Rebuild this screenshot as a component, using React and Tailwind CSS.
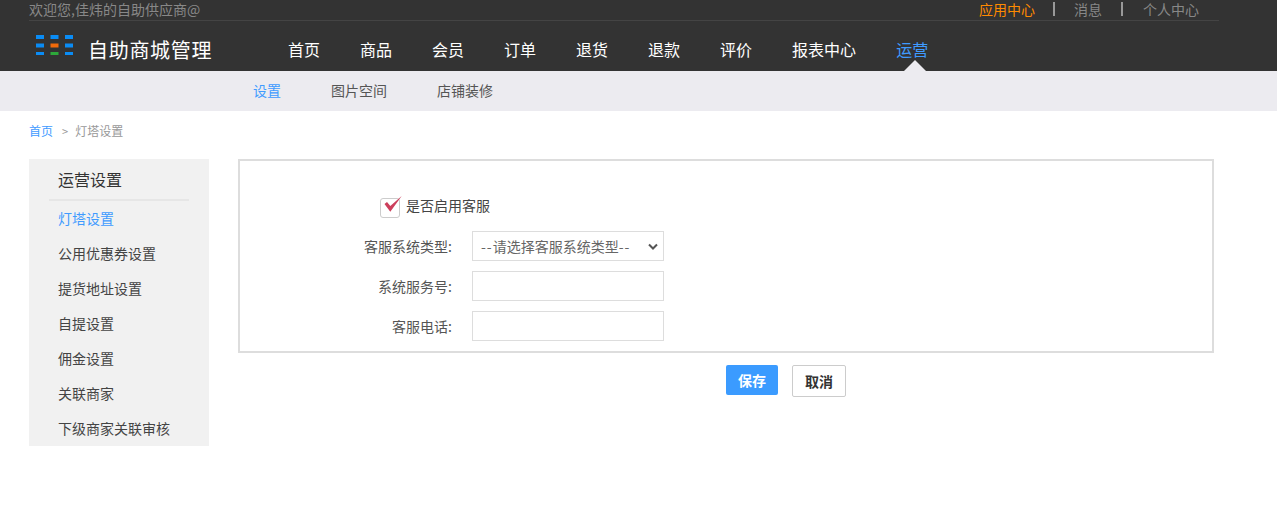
const FONT = "font-['Microsoft_YaHei','Noto_Sans_CJK_SC','Noto_Sans',sans-serif]";

function Logo() {
  const colors = [
    ["#0a8cf5", "#0a8cf5", "#0a8cf5"],
    ["#0a8cf5", "#f26a0a", "#0a8cf5"],
    ["#0a8cf5", "#2da83a", "#0a8cf5"],
  ];
  return (
    <svg width="38" height="20" viewBox="0 0 38 20" className="block">
      {colors.map((row, r) =>
        row.map((c, i) => (
          <rect key={`${r}-${i}`} x={i * 14.5} y={r * 8.5} width="8" height="4" fill={c} />
        ))
      )}
    </svg>
  );
}

const nav = ["首页", "商品", "会员", "订单", "退货", "退款", "评价", "报表中心"];
const side = ["公用优惠券设置", "提货地址设置", "自提设置", "佣金设置", "关联商家", "下级商家关联审核"];

function Label({ children }) {
  return <label className="w-[232px] pr-[20px] text-right text-[14px] text-[#555] leading-[20px] shrink-0">{children}</label>;
}

export default function App() {
  return (
    <div className={`${FONT} w-[1277px] h-[505px] bg-white overflow-hidden`}>
      <header className="bg-[#333333] h-[71px]">
        <div className="ml-[29px] w-[1190px] h-[21px] border-b border-[#444444] flex items-start justify-between">
          <span className="text-[14px] leading-[18px] text-[#888888]">欢迎您,佳炜的自助供应商@</span>
          <div className="flex items-center text-[14px] leading-[18px] text-[#888888] pr-[20px]">
            <span className="text-[#ff8a00]">应用中心</span>
            <span className="w-[2px] h-[14px] bg-[#999999] ml-[18px] mr-[19px]"></span>
            <span>消息</span>
            <span className="w-[2px] h-[14px] bg-[#999999] ml-[19px] mr-[20px]"></span>
            <span>个人中心</span>
          </div>
        </div>
        <div className="flex h-[50px] relative">
          <div className="ml-[36px] mt-[14px] w-[52px]"><Logo /></div>
          <div className="w-[200px] pt-[15px] text-[20px] tracking-[0.7px] leading-[28px] text-white whitespace-nowrap">自助商城管理</div>
          <nav className="flex gap-[40px] pt-[16px] text-[16px] leading-[24px] text-white">
            {nav.map((n) => <a key={n} className="whitespace-nowrap">{n}</a>)}
            <a className="relative text-[#3f9bff] whitespace-nowrap">
              运营
              <span className="absolute left-[8px] top-[23px] w-0 h-0 border-x-[11px] border-b-[11px] border-x-transparent border-b-[#ecebf0]"></span>
            </a>
          </nav>
        </div>
      </header>
      <div className="bg-[#ecebf0] h-[40px] flex items-center pb-[2px] pl-[253px] gap-[50px] text-[14px] text-[#555]">
        <a className="text-[#3f9bff]">设置</a>
        <a>图片空间</a>
        <a>店铺装修</a>
      </div>
      <div className="ml-[29px] h-[40px] flex items-center text-[12px] text-[#999999]">
        <a className="text-[#3f9bff]">首页</a>
        <span className="ml-[9px] mr-[7px] text-[11px]">&gt;</span>
        <span>灯塔设置</span>
      </div>
      <div className="flex ml-[29px] mt-[8px] items-start">
        <aside className="w-[180px] h-[287px] bg-[#f1f1f1] shrink-0">
          <div className="mx-[20px] h-[42px] border-b-2 border-[#e6e6e6] pl-[9px] pt-[7px] text-[16px] leading-[26px] text-[#333]">运营设置</div>
          <ul className="pl-[29px] text-[14px] text-[#444]">
            <li className="h-[35px] leading-[35px] text-[#3f9bff]">灯塔设置</li>
            {side.map((s) => <li key={s} className="h-[35px] leading-[35px]">{s}</li>)}
          </ul>
        </aside>
        <main className="ml-[29px] w-[976px]">
          <div className="h-[194px] border-2 border-[#dddddd] pt-[35px]">
            <div className="flex items-end h-[22px] pl-[140px]">
              <span className="relative w-[20px] h-[20px] rounded-[3px] border border-[#cccccc] bg-white shrink-0">
                <svg className="absolute -top-[4px] left-[3px]" width="19" height="18" viewBox="0 0 19 18">
                  <path d="M0.5 9 L3 7 L6.3 11 L17.7 1 L6.3 16.7 Z" fill="#cc3f5c" />
                </svg>
              </span>
              <span className="ml-[6px] text-[14px] leading-[20px] -translate-y-[3px] text-[#444]">是否启用客服</span>
            </div>
            <div className="flex items-center mt-[13px] h-[30px]">
              <Label>客服系统类型:</Label>
              <div className="relative w-[192px] h-[30px] border border-[#dddddd] bg-white pl-[8px] text-[14px] leading-[28px] text-[#666] whitespace-nowrap">
                <span className="tracking-[1px]">--</span>请选择客服系统类型<span className="tracking-[1px]">--</span>
                <svg className="absolute right-[5px] top-[11px]" width="10" height="8" viewBox="0 0 10 8">
                  <path d="M1 1.5 L5 5.5 L9 1.5" fill="none" stroke="#555555" strokeWidth="2" />
                </svg>
              </div>
            </div>
            <div className="flex items-center mt-[10px] h-[30px]">
              <Label>系统服务号:</Label>
              <input className="w-[192px] h-[30px] border border-[#dddddd] bg-white" />
            </div>
            <div className="flex items-center mt-[10px] h-[30px]">
              <Label>客服电话:</Label>
              <input className="w-[192px] h-[30px] border border-[#dddddd] bg-white" />
            </div>
          </div>
          <div className="flex gap-[14px] mt-[12px] pl-[488px]">
            <button className="w-[52px] h-[30px] rounded-[2px] bg-[#3b9bff] text-white text-[14px] font-bold">保存</button>
            <button className="w-[54px] h-[32px] rounded-[2px] border border-[#cccccc] bg-white text-[#333] text-[14px] font-bold">取消</button>
          </div>
        </main>
      </div>
    </div>
  );
}
